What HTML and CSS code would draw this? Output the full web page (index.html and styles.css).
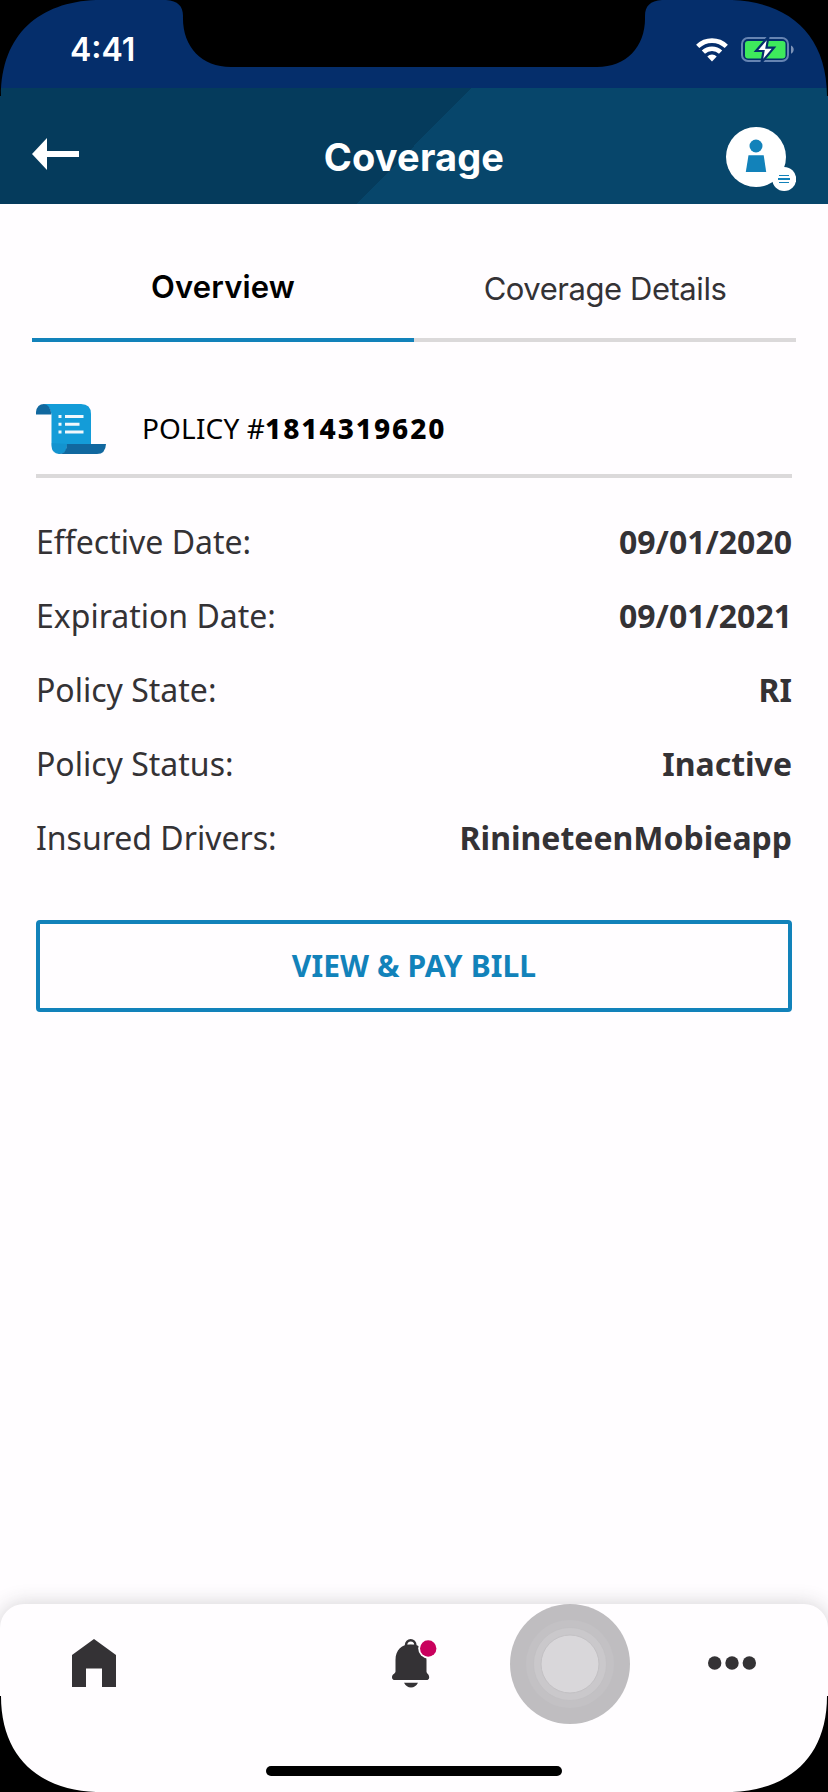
FILE: index.html
```html
<!DOCTYPE html>
<html lang="en">
<head>
<meta charset="utf-8">
<title>Coverage</title>
<link rel="stylesheet" href="styles.css">
</head>
<body>
<div class="phone">
  <div class="status-bar">
    <span class="clock">4:41</span>
    <div class="status-icons">
      <svg class="wifi" width="32" height="26" viewBox="0 0 32 26">
        <g fill="none" stroke="#fff" stroke-width="4.6">
          <path d="M1.7 9.4A20.6 20.6 0 0 1 30.3 9.4"/>
          <path d="M7.4 15.2A12.4 12.4 0 0 1 24.6 15.2"/>
        </g>
        <path fill="#fff" d="M11.3 19.4a6.7 6.7 0 0 1 9.4 0L16 24.4z"/>
      </svg>
      <svg class="battery" width="54" height="26" viewBox="0 0 54 26">
        <rect x="1" y="1" width="46" height="23" rx="6" fill="none" stroke="#6684b2" stroke-width="2"/>
        <path fill="#7d93b7" d="M50 8.600c3.600 1.400 3.600 6.800 0 8.200z"/>
        <rect x="4" y="4" width="40.500" height="17.400" rx="3" fill="#3eea5c"/>
        <path fill="#fff" stroke="#052e6b" stroke-width="2.200" d="M27.500-.5 15 14h7.500L20.500 25.500 33 10.600h-7.500z"/>
      </svg>
    </div>
  </div>
  <header class="header">
    <svg class="back" width="48" height="34" viewBox="0 0 48 34">
      <path fill="#fff" d="M0 17 15 1v13h32v6H15v13z"/>
    </svg>
    <h1 class="title">Coverage</h1>
    <svg class="avatar" width="70" height="64" viewBox="0 0 70 64">
      <circle cx="30" cy="30" r="30" fill="#fff"/>
      <circle cx="30" cy="19" r="6.500" fill="#1282ba"/>
      <path fill="#1282ba" d="M22.500 28.300h15.200L40.200 45H19.800z"/>
      <circle cx="58.200" cy="52" r="12" fill="#fff"/>
      <path stroke="#1282ba" stroke-width="1" d="M53 48.500h10M53 55.500h10"/>
      <path stroke="#1282ba" stroke-width="2" d="M52 52h12"/>
    </svg>
  </header>
  <main class="content">
    <nav class="tabs">
      <div class="tab tab-active"><span class="tab-overview">Overview</span></div>
      <div class="tab tab-details"><span>Coverage Details</span></div>
    </nav>
    <div class="policy">
      <svg class="scroll" width="70" height="50" viewBox="0 0 70 50">
        <path fill="#149cd8" d="M7 0h38q10 0 10 10v30L31 41q0 9-8 9-7.500-1-7.500-9V10Q14 2 7 0z"/>
        <path fill="#11689f" d="M0 10.500V8Q1 0 8 0q6.500 1 7.500 10.500z"/>
        <path fill="#1284c0" d="M23 50q-7 0-7.500-8V39L31 40v3q-1 7-8 7z" opacity=".35"/>
        <path fill="#11689f" d="M31 40h39q-.5 10-9 10H22q9 0 9-10z"/>
        <path fill="#f2f8fc" d="M22.500 11h3v3h-3zM29 11h18.500v3H29zM22.500 18.700h3v3h-3zM29 18.700h14.500v3H29zM22.500 26.500h3v3h-3zM29 26.500h18.500v3H29z"/>
      </svg>
      <div class="policy-text"><span class="policy-label">POLICY #</span><strong class="policy-number">1814319620</strong></div>
    </div>
    <dl class="details">
      <div class="row"><dt>Effective Date:</dt><dd>09/01/2020</dd></div>
      <div class="row"><dt>Expiration Date:</dt><dd>09/01/2021</dd></div>
      <div class="row"><dt>Policy State:</dt><dd>RI</dd></div>
      <div class="row"><dt>Policy Status:</dt><dd>Inactive</dd></div>
      <div class="row"><dt>Insured Drivers:</dt><dd>RinineteenMobieapp</dd></div>
    </dl>
    <button class="pay">VIEW &amp; PAY BILL</button>
  </main>
  <footer class="bottom-bar">
    <div class="nav-icons">
      <svg width="44" height="48" viewBox="0 0 44 48">
        <path fill="#343235" d="M22 0 44 16v32H30V29.500H14V48H0V16z"/>
      </svg>
      <svg class="bell" width="46" height="49" viewBox="0 0 46 49">
        <circle cx="18.700" cy="6" r="4.700" fill="none" stroke="#343235" stroke-width="2.400"/>
        <path fill="#343235" d="M3.500 21C3.500 10.500 10 5.200 18.700 5.200S34.500 11 34.500 21v11.500c0 2 2.700 2.700 2.700 5.700q0 2.800-3 2.800H3q-3 0-3-2.800c0-3 3.500-3.700 3.500-5.700zM12 43.700h14q-2.500 4.800-7 4.800t-7-4.800z"/>
        <path fill="#fffdff" d="M15.800 5.300q.5-2 2.900-2t2.900 2z"/>
        <circle cx="36.200" cy="9.500" r="10" fill="#fffdff"/>
        <circle cx="36.200" cy="9.500" r="8.200" fill="#c9005d"/>
      </svg>
      <svg class="more" width="48" height="14" viewBox="0 0 48 14">
        <g fill="#343235"><circle cx="6.700" cy="7" r="6.700"/><circle cx="24" cy="7" r="6.700"/><circle cx="41.300" cy="7" r="6.700"/></g>
      </svg>
    </div>
    <div class="home-indicator"></div>
  </footer>
  <svg class="touch" width="120" height="120" viewBox="0 0 120 120">
    <circle cx="60" cy="60" r="60" fill="#bfbdc0"/>
    <circle cx="60" cy="60" r="44" fill="#c3c1c4"/>
    <circle cx="60" cy="60" r="36.500" fill="#cac8cb" stroke="#c0bec1" stroke-width=".7"/>
    <circle cx="60" cy="60" r="29" fill="#d9d7da" stroke="#c3c1c4" stroke-width="1"/>
  </svg>
  <svg class="bezel" width="828" height="1792" viewBox="0 0 828 1792">
    <path d="M0 0H96C40 2 1 34 1 96H0zM828 0H732C788 2 827 34 827 96H828zM0 1792H96C40 1790 1 1758 1 1696H0zM828 1792H732C788 1790 827 1758 827 1696H828z"/>
    <path d="M166 0C178 1 183 6 183 16C182 46 201 67 231 67H597C627 67 646 46 645 16C645 6 650 1 662 0z"/>
  </svg>
</div>
</body>
</html>
```

FILE: styles.css
```css
* { box-sizing: border-box; }
body { margin: 0; }

.phone {
  position: relative;
  display: flex;
  flex-direction: column;
  width: 828px;
  height: 1792px;
  overflow: hidden;
  background: #fffdff;
  color: #343235;
  font-family: "Noto Sans", sans-serif;
}

.status-bar {
  display: flex;
  flex: none;
  justify-content: space-between;
  height: 88px;
  padding: 30px 33px 0 70px;
  background: #052e6b;
}
.clock {
  color: #fff;
  font: 600 32px/40px Inter, sans-serif;
}
.status-icons { display: flex; gap: 13px; padding-top: 7px; }

.header {
  display: flex;
  flex: none;
  align-items: flex-start;
  justify-content: space-between;
  height: 116px;
  padding: 0 32px;
  background: linear-gradient(134.500deg, #053b5c 50%, #07466b 50%);
}
.back { margin-top: 49px; }
.title {
  margin: 45px 0 0 22px;
  color: #fff;
  font: 700 38px/48px Inter, sans-serif;
  letter-spacing: .15px;
}
.avatar { margin-top: 39px; }

.content { flex: 1; padding: 0 36px; }
.tabs { display: flex; margin: 0 -4px; height: 138px; }
.tab {
  flex: 1;
  padding-top: 61px;
  border-bottom: 4px solid #dbd9da;
  text-align: center;
  font: 400 31px/44px Inter, sans-serif;
}
.tab-active { border-color: #1282ba; color: #000; font-weight: 600; letter-spacing: .15px; }
.tab-details { padding-top: 63px; letter-spacing: -.45px; }

.policy {
  display: flex;
  height: 136px;
  padding-top: 62px;
  border-bottom: 4px solid #dbd9da;
  color: #000;
}
.policy-text { margin: -1px 0 0 36px; font-size: 28px; line-height: 50px; }
.policy-label { letter-spacing: .15px; }
.policy-number { font-weight: 800; letter-spacing: 1.950px; }

.details { margin: 27px 0 0; }
.row {
  display: flex;
  justify-content: space-between;
  height: 74px;
  font-size: 32px;
  line-height: 74px;
}
.row dd { margin: 0; font-weight: 700; }

.pay {
  display: block;
  width: 100%;
  height: 92px;
  margin-top: 45px;
  border: 4px solid #1282ba;
  border-radius: 4px;
  background: transparent;
  color: #1282ba;
  font: 700 30px/84px "Noto Sans", sans-serif;
  letter-spacing: .1px;
  padding: 0;
}

.bottom-bar {
  display: flex;
  flex: none;
  flex-direction: column;
  align-items: center;
  justify-content: space-between;
  height: 188px;
  padding-bottom: 16px;
  border-radius: 24px 24px 0 0;
  background: #fffdff;
  box-shadow: 0 0 20px rgba(52, 50, 53, .22);
}
.nav-icons {
  display: flex;
  justify-content: space-between;
  width: 100%;
  padding: 35px 72px 0;
}
.bell { margin-left: 6px; }
.more { margin-top: 17px; }
.home-indicator { width: 296px; height: 10px; border-radius: 5px; background: #000; }

/* Touch pointer and device frame lie over the screen */
.touch { position: absolute; left: 510px; top: 1604px; }
.bezel { position: absolute; left: 0; top: 0; }
```
